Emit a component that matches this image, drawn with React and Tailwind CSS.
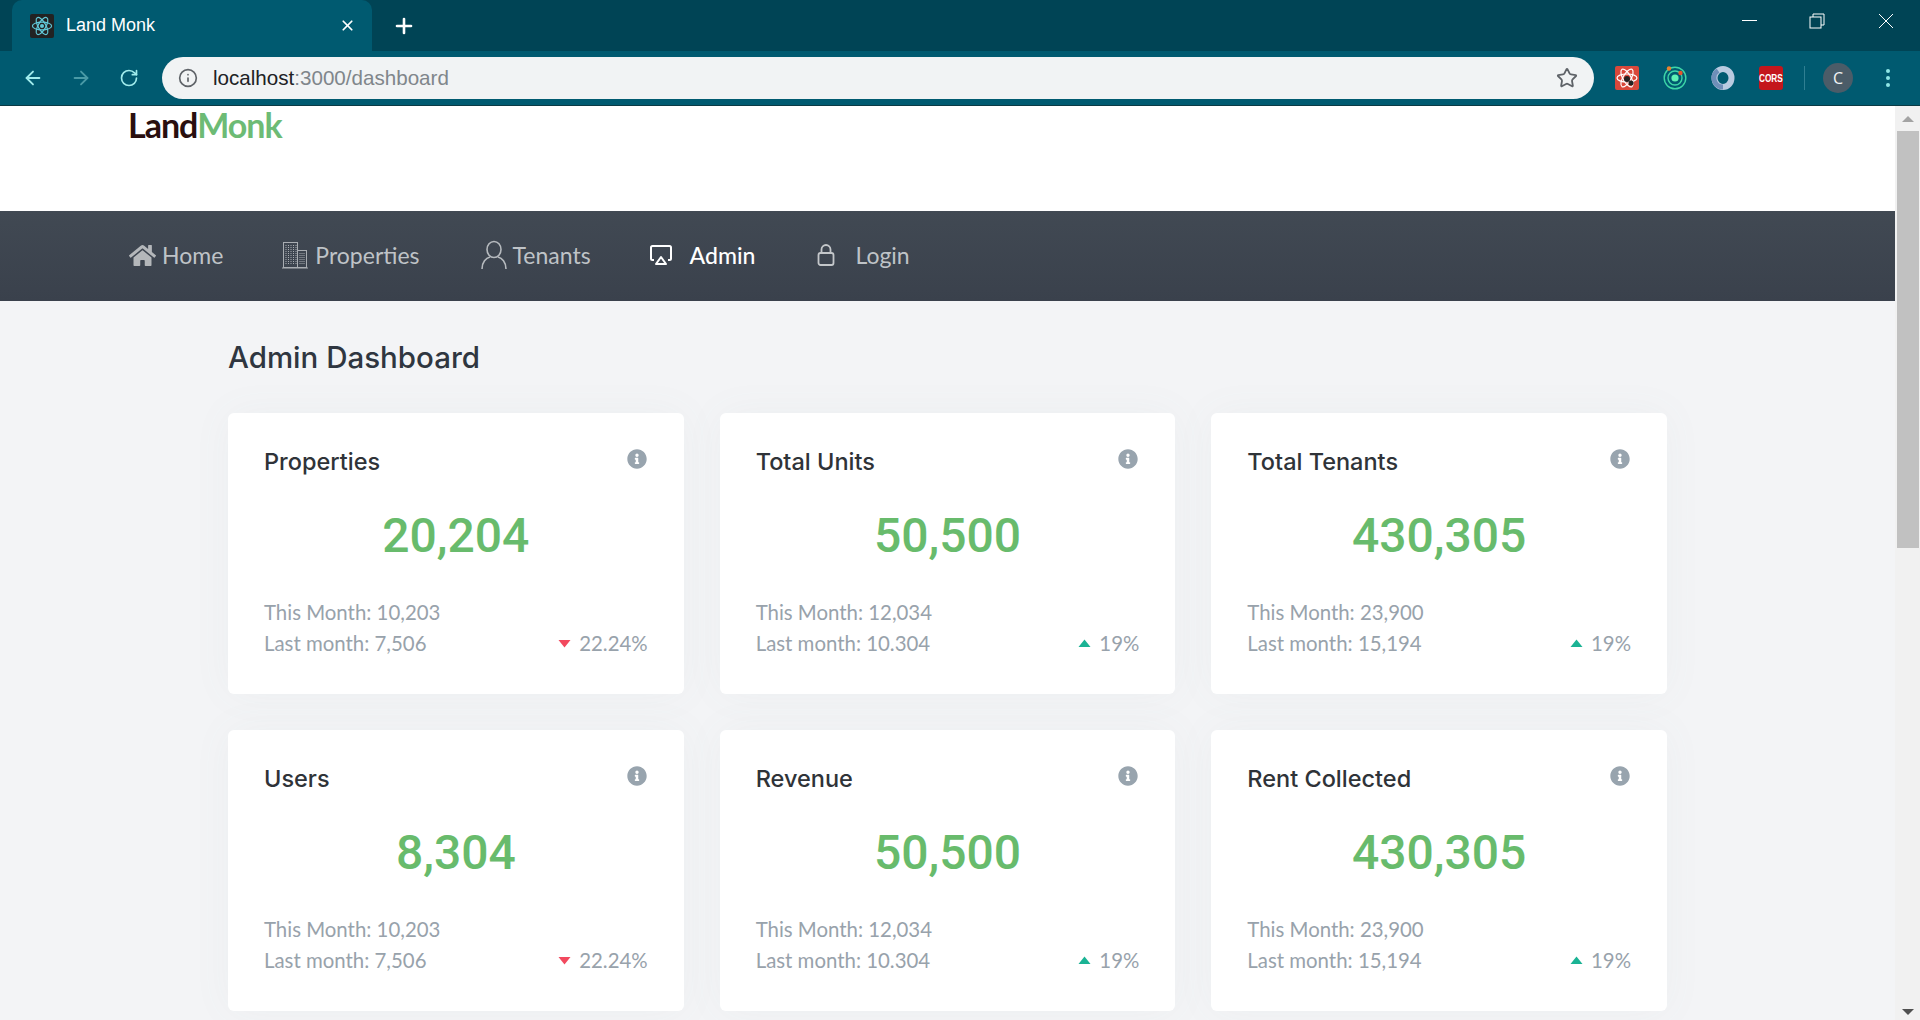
import { ArrowLeft, ArrowRight, RotateCw, Info, Star, X, Plus } from 'lucide-react'
import { FaHome, FaInfoCircle } from 'react-icons/fa'

const cards = [
  { title: 'Properties', value: '20,204', thisMonth: '10,203', lastMonth: '7,506', change: '22.24%', down: true },
  { title: 'Total Units', value: '50,500', thisMonth: '12,034', lastMonth: '10.304', change: '19%' },
  { title: 'Total Tenants', value: '430,305', thisMonth: '23,900', lastMonth: '15,194', change: '19%' },
  { title: 'Users', value: '8,304', thisMonth: '10,203', lastMonth: '7,506', change: '22.24%', down: true },
  { title: 'Revenue', value: '50,500', thisMonth: '12,034', lastMonth: '10.304', change: '19%' },
  { title: 'Rent Collected', value: '430,305', thisMonth: '23,900', lastMonth: '15,194', change: '19%' },
]

function ReactFavicon() {
  return (
    <svg width="24" height="24" viewBox="0 0 20 20" className="rounded-[2px] bg-[#222]">
      <g fill="none" stroke="#61c8d8" strokeWidth="1">
        <ellipse cx="10" cy="10" rx="8" ry="3.2" />
        <ellipse cx="10" cy="10" rx="8" ry="3.2" transform="rotate(60 10 10)" />
        <ellipse cx="10" cy="10" rx="8" ry="3.2" transform="rotate(120 10 10)" />
      </g>
      <circle cx="10" cy="10" r="1.7" fill="#61c8d8" />
    </svg>
  )
}

function Extensions() {
  return (
    <div className="flex items-center">
      <svg width="24" height="24" viewBox="0 0 24 24" className="ml-[21px]">
        <rect width="24" height="24" rx="2" fill="#d9483b" />
        <g fill="none" stroke="#fff" strokeWidth="1.2">
          <ellipse cx="12" cy="12" rx="10" ry="4" />
          <ellipse cx="12" cy="12" rx="10" ry="4" transform="rotate(60 12 12)" />
          <ellipse cx="12" cy="12" rx="10" ry="4" transform="rotate(120 12 12)" />
        </g>
        <circle cx="12" cy="13" r="3" fill="#222" />
        <circle cx="16" cy="17" r="2.5" fill="#222" />
      </svg>
      <svg width="24" height="24" viewBox="0 0 24 24" className="ml-6">
        <circle cx="12" cy="12" r="10.8" fill="none" stroke="#3dd6a8" strokeWidth="1.4" />
        <circle cx="12" cy="12" r="7" fill="none" stroke="#3dd6a8" strokeWidth="1.4" />
        <circle cx="12" cy="12" r="3.6" fill="#5ef0b4" />
        <circle cx="6" cy="2.5" r="2.2" fill="#e9822e" />
        <circle cx="17.5" cy="7" r="2.2" fill="#e4572e" />
      </svg>
      <svg width="24" height="24" viewBox="0 0 24 24" className="ml-6">
        <ellipse cx="12" cy="12" rx="8.5" ry="9" fill="none" stroke="#b9cbe0" strokeWidth="6" />
        <path d="M7 4.5a9 9 0 0 0 5 16.5" fill="none" stroke="#6f8fb8" strokeWidth="5" />
      </svg>
      <div className="ml-6 flex h-6 w-6 items-center justify-center rounded-[3px] bg-[#c4161c] text-[11px] font-bold leading-none text-white font-['Liberation_Sans',sans-serif]">
        <span className="scale-x-75">CORS</span>
      </div>
      <div className="ml-[21px] h-6 w-px bg-[#2f7f92]" />
      <div className="ml-[18px] flex h-[30px] w-[30px] items-center justify-center rounded-full bg-[#4b5c68] text-base text-[#f1f3f4]">C</div>
      <div className="ml-[33px] flex flex-col gap-[3px]">
        <span className="h-1 w-1 rounded-full bg-[#8fe6e6]" />
        <span className="h-1 w-1 rounded-full bg-[#8fe6e6]" />
        <span className="h-1 w-1 rounded-full bg-[#8fe6e6]" />
      </div>
    </div>
  )
}

function BrowserChrome() {
  return (
    <div className="relative z-10 shrink-0 border-b border-[#0b3a44] font-['Open_Sans',sans-serif]">
      <div className="flex h-[51px] bg-[#004455]">
        <div className="ml-[12px] flex h-[51px] w-[360px] items-center rounded-t-[10px] bg-[#005a70] pl-[18px] pr-[16px] text-white">
          <ReactFavicon />
          <span className="ml-[12px] flex-1 text-[18px] font-['Liberation_Sans',sans-serif]">Land Monk</span>
          <X size={17} strokeWidth={2.4} />
        </div>
        <div className="ml-[20px] flex items-center text-white">
          <Plus size={24} strokeWidth={2.6} />
        </div>
        <div className="ml-auto flex items-start text-white">
          <svg width="16" height="16" viewBox="0 0 16 16" className="mr-[52px] mt-[13px]"><path d="M1 7.5h15" stroke="#fff" /></svg>
          <svg width="16" height="16" viewBox="0 0 16 16" className="mr-[53px] mt-[13px]" fill="none" stroke="#fff"><rect x="1" y="4" width="11" height="11" /><path d="M4 4V1h11v11h-3" /></svg>
          <svg width="16" height="16" viewBox="0 0 16 16" className="mr-[26px] mt-[13px]" stroke="#fff"><path d="M1 1l14 14M15 1L1 15" /></svg>
        </div>
      </div>
      <div className="flex h-[54px] items-center bg-[#005a70] pl-[22px] pr-[30px]">
        <ArrowLeft size={22} className="text-[#a0ecec]" />
        <ArrowRight size={22} className="ml-[26px] text-[#4a9aa6]" />
        <RotateCw size={20} className="ml-[27px] text-[#a0ecec]" />
        <div className="ml-[23px] flex h-[42px] flex-1 items-center rounded-full bg-[#f1f3f4] pl-[16px] pr-[16px]">
          <Info size={20} className="text-[#5f6368]" />
          <span className="ml-[15px] flex-1 text-[20.6px] font-['Liberation_Sans',sans-serif] text-[#202124]">
            localhost<span className="text-[#80868b]">:3000/dashboard</span>
          </span>
          <Star size={22} className="text-[#5f6368]" strokeWidth={2} />
        </div>
        <Extensions />
      </div>
    </div>
  )
}

function BuildingIcon() {
  return (
    <svg width="26" height="28" viewBox="0 0 26 28" fill="none" stroke="#a9adb2">
      <rect x="1.5" y="1.5" width="14" height="25" />
      <rect x="15.5" y="9.5" width="9" height="17" />
      <path d="M0 27h26" />
      <path d="M4 4v20M6.5 4v20M9 4v20M11.5 4v20M14 4v20M18 12v12M20 12v12M22 12v12" strokeDasharray="1 1" />
    </svg>
  )
}

function UserIcon() {
  return (
    <svg width="28" height="30" viewBox="0 0 28 30" fill="none" stroke="#b6babe" strokeWidth="1.6">
      <ellipse cx="14" cy="9.5" rx="7" ry="8" />
      <path d="M2 29c0-7 4-11 8-12M26 29c0-7-4-11-8-12" />
    </svg>
  )
}

function AdminIcon() {
  return (
    <svg width="24" height="24" viewBox="0 0 24 24" fill="none" stroke="#fff" strokeWidth="2">
      <path d="M5 17H3.5A1.5 1.5 0 0 1 2 15.5v-11A1.5 1.5 0 0 1 3.5 3h17A1.5 1.5 0 0 1 22 4.5v11a1.5 1.5 0 0 1-1.5 1.5H19" />
      <path d="M12 14l5 7H7z" strokeLinejoin="round" />
    </svg>
  )
}

function LockIcon() {
  return (
    <svg width="22" height="24" viewBox="0 0 22 24" fill="none" stroke="#c4c7ca" strokeWidth="1.8">
      <rect x="3.5" y="10" width="15" height="12" rx="2" />
      <path d="M6.5 10V6.5a4.5 4.5 0 0 1 9 0V10" />
    </svg>
  )
}

function NavBar() {
  return (
    <nav className="flex h-[90px] shrink-0 items-center bg-gradient-to-b from-[#414953] to-[#3a414c] pb-[2px] pl-[129px] text-[23px] text-[#bfc3c7] font-['Lato',sans-serif]">
      <div className="flex items-center gap-[6px]">
        <FaHome size={27} className="text-[#b4b7ba]" />
        <span>Home</span>
      </div>
      <div className="ml-[59px] flex items-center gap-[7px]">
        <BuildingIcon />
        <span>Properties</span>
      </div>
      <div className="ml-[60px] flex items-center gap-[5px]">
        <UserIcon />
        <span>Tenants</span>
      </div>
      <div className="ml-[58px] flex items-center gap-[17px] font-medium text-white">
        <AdminIcon />
        <span>Admin</span>
      </div>
      <div className="ml-[60px] flex items-center gap-[18px]">
        <LockIcon />
        <span>Login</span>
      </div>
    </nav>
  )
}

function StatCard({ card }) {
  return (
    <div className="h-[281px] rounded-[6px] bg-white pl-[36px] pr-[36px] pt-[31px] shadow-[0_0_40px_rgba(120,130,140,0.05)]">
      <div className="flex items-start justify-between">
        <h3 className="text-[23.5px] font-medium leading-[36px] text-[#2f3338] font-['Inter',sans-serif]">{card.title}</h3>
        <FaInfoCircle size={20} className="mr-px mt-[5px] text-[#98a4ae]" />
      </div>
      <div className="mt-[30px] text-center text-[48px] font-medium leading-[52px] text-[#68bb6c] font-['Roboto',sans-serif]">{card.value}</div>
      <div className="mt-[35px] text-[20.4px] leading-[31px] text-[#98a2ab] font-['Lato',sans-serif]">
        <div>This Month: {card.thisMonth}</div>
        <div className="flex items-center justify-between">
          <span>Last month: {card.lastMonth}</span>
          <span className="flex items-center gap-[8px]">
            {card.down ? (
              <svg width="13" height="9" viewBox="0 0 13 9"><path d="M0.5 1h12L6.5 8.5z" fill="#f2495e" /></svg>
            ) : (
              <svg width="13" height="9" viewBox="0 0 13 9"><path d="M0.5 8h12L6.5 0.5z" fill="#1ab394" /></svg>
            )}
            {card.change}
          </span>
        </div>
      </div>
    </div>
  )
}

function Scrollbar() {
  return (
    <div className="flex w-[25px] shrink-0 flex-col items-center bg-[#f1f1f1]">
      <div className="mt-[10px] h-0 w-0 border-x-[6px] border-b-[6px] border-x-transparent border-b-[#a3a3a3]" />
      <div className="mt-[9px] h-[417px] w-[22px] bg-[#c1c1c1]" />
      <div className="mt-auto mb-[5px] h-0 w-0 border-x-[6px] border-t-[6px] border-x-transparent border-t-[#505050]" />
    </div>
  )
}

export default function App() {
  return (
    <div className="flex h-screen flex-col overflow-hidden bg-[#f3f4f6]">
      <BrowserChrome />
      <div className="flex min-h-0 flex-1">
        <main className="min-w-0 flex-1">
          <header className="h-[105px] bg-white pl-[128px]">
            <div className="text-[34px] font-bold leading-[38px] tracking-[-1px] font-['Lato',sans-serif]">
              <span className="text-[#2a0f0f]">Land</span><span className="text-[#6dbb75]">Monk</span>
            </div>
          </header>
          <NavBar />
          <div className="pl-[228px] pr-[228px] pt-[36px]">
            <h1 className="text-[29.5px] font-medium leading-[40px] text-[#2f3640] font-['Inter',sans-serif]">Admin Dashboard</h1>
            <div className="mt-[36px] grid w-[1439px] grid-cols-3 gap-x-[36px] gap-y-[36px]">
              {cards.map(card => <StatCard key={card.title} card={card} />)}
            </div>
          </div>
        </main>
        <Scrollbar />
      </div>
    </div>
  )
}
